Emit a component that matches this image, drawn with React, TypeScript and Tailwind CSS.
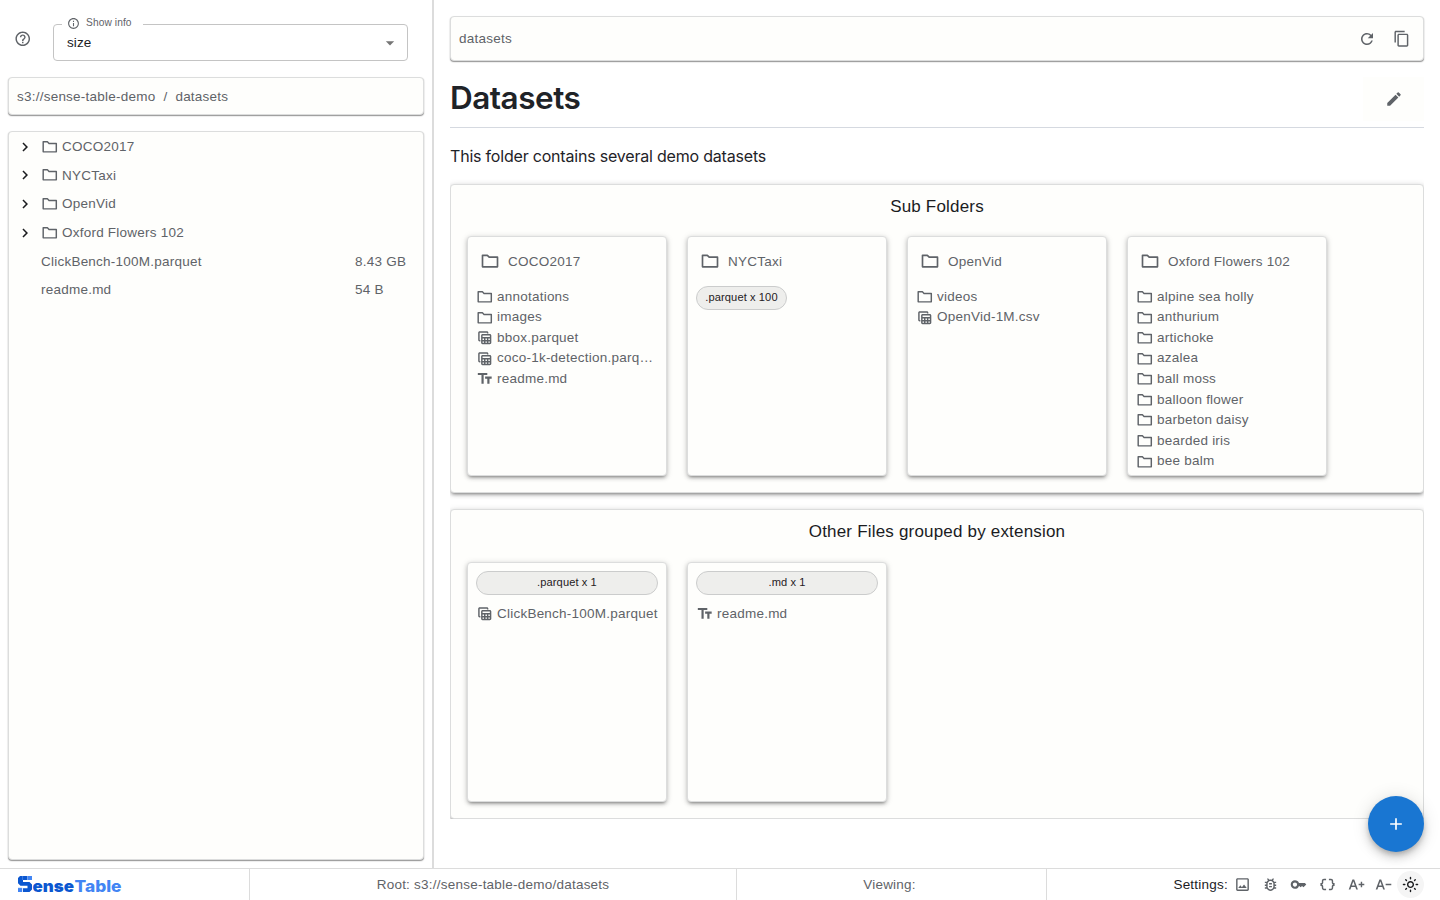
import React from "react";
import {
  MdAdd,
  MdArrowDropDown,
  MdChevronRight,
  MdContentCopy,
  MdDataObject,
  MdEdit,
  MdHelpOutline,
  MdInfoOutline,
  MdKey,
  MdOutlineBugReport,
  MdOutlineImage,
  MdOutlineLightMode,
  MdRefresh,
  MdTableView,
  MdTextDecrease,
  MdTextFields,
  MdTextIncrease,
} from "react-icons/md";

type Kind = "folder" | "table" | "text";
type Entry = { kind: Kind; name: string };

function FolderIcon({ className }: { className?: string }) {
  return (
    <svg viewBox="0 0 24 24" fill="none" stroke="currentColor" className={className}>
      <path d="M3 19V5.2h5.8l2.2 2.2H21V19z" strokeWidth="2" strokeLinejoin="round" />
    </svg>
  );
}

const icons: Record<Kind, React.ComponentType<{ className?: string }>> = {
  folder: FolderIcon,
  table: MdTableView,
  text: MdTextFields,
};

const dir = (name: string): Entry => ({ kind: "folder", name });

const folders: { name: string; chip?: string; entries: Entry[] }[] = [
  {
    name: "COCO2017",
    entries: [
      dir("annotations"),
      dir("images"),
      { kind: "table", name: "bbox.parquet" },
      { kind: "table", name: "coco-1k-detection.parquet" },
      { kind: "text", name: "readme.md" },
    ],
  },
  { name: "NYCTaxi", chip: ".parquet x 100", entries: [] },
  { name: "OpenVid", entries: [dir("videos"), { kind: "table", name: "OpenVid-1M.csv" }] },
  {
    name: "Oxford Flowers 102",
    entries: [
      "alpine sea holly",
      "anthurium",
      "artichoke",
      "azalea",
      "ball moss",
      "balloon flower",
      "barbeton daisy",
      "bearded iris",
      "bee balm",
    ].map(dir),
  },
];

const groups: { chip: string; entry: Entry }[] = [
  { chip: ".parquet x 1", entry: { kind: "table", name: "ClickBench-100M.parquet" } },
  { chip: ".md x 1", entry: { kind: "text", name: "readme.md" } },
];

const looseFiles = [
  { name: "ClickBench-100M.parquet", size: "8.43 GB" },
  { name: "readme.md", size: "54 B" },
];

const barShadow = "shadow-[0_1px_1px_rgba(0,0,0,0.35),0_1px_2px_rgba(0,0,0,0.12)]";
const cardShadow =
  "shadow-[0_3px_3px_-2px_rgba(0,0,0,0.3),0_2px_4px_0_rgba(0,0,0,0.18),0_1px_7px_0_rgba(0,0,0,0.12)]";

function EntryRow({ entry }: { entry: Entry }) {
  const Icon = icons[entry.kind];
  return (
    <div className="flex h-[20.57px] items-center gap-[4px]">
      <Icon className="mt-[1px] -ml-[0.5px] size-[17.5px] shrink-0" />
      <span className="truncate pt-[1px]">{entry.name}</span>
    </div>
  );
}

function Card({ children }: { children: React.ReactNode }) {
  return (
    <div
      className={`h-[240px] w-[200px] overflow-hidden rounded-[4px] border border-[#dcdddd] bg-[#fefefc] pr-[7px] pl-2 ${cardShadow}`}
    >
      {children}
    </div>
  );
}

function Chip({ label, wide = false }: { label: string; wide?: boolean }) {
  return (
    <div
      className={`flex h-6 items-center justify-center rounded-full border border-[#cbcccc] bg-[#eeeeec] pb-[2px] text-[11.1px] tracking-[0.1px] text-[#1f2023] ${wide ? "w-[182px]" : "w-[91px]"}`}
    >
      {label}
    </div>
  );
}

function Sidebar() {
  return (
    <aside className="flex w-[434px] shrink-0 flex-col border-r-2 border-[#dcdcdc] pr-2 pl-2">
      <div className="flex h-[77px] shrink-0">
        <MdHelpOutline className="mt-[30px] ml-[5.5px] size-[17.5px]" />
        <div className="relative mt-6 ml-[22px] flex h-[37px] w-[355px] items-center rounded-[4px] border border-[#c4c4c4] pr-[7px] pl-[13px] text-[#1b1c1f]">
          <span className="grow tracking-[0.1px]">size</span>
          <MdArrowDropDown className="size-5 text-[#757575]" />
          <div className="absolute -top-[9px] left-2 flex h-[14px] w-[81px] items-center bg-white pl-[5px] text-[10.2px] tracking-[0.1px] text-[#5f6368]">
            <MdInfoOutline className="mr-[6px] size-[13px]" />
            Show info
          </div>
        </div>
      </div>
      <div
        className={`flex h-[38px] shrink-0 items-center gap-2 rounded-[4px] border border-[#dcdddd] bg-[#fefefc] px-2 pt-[1px] ${barShadow}`}
      >
        <span>s3://sense-table-demo</span>
        <span>/</span>
        <span>datasets</span>
      </div>
      <div
        className={`mt-4 h-[729px] rounded-[4px] border border-[#dcdddd] bg-[#fefefc] pt-[0.25px] ${barShadow}`}
      >
        {folders.map((f) => (
          <div key={f.name} className="flex h-[28.67px] items-center pl-[7px]">
            <MdChevronRight className="size-[18px] text-[#1b1c1f]" />
            <FolderIcon className="mr-[4px] ml-[6.5px] size-[17.5px]" />
            <span className="pt-[1px]">{f.name}</span>
          </div>
        ))}
        {looseFiles.map((f) => (
          <div key={f.name} className="flex h-[28.67px] items-center pt-[1px] pl-8">
            <span className="w-[314px]">{f.name}</span>
            <span>{f.size}</span>
          </div>
        ))}
      </div>
    </aside>
  );
}

function Main() {
  return (
    <main className="min-w-0 grow pt-4 pr-4 pl-4">
      <div
        className={`flex h-[45px] items-center rounded-[4px] border border-[#dcdddd] bg-[#fefefc] px-2 ${barShadow}`}
      >
        <span className="grow">datasets</span>
        <MdRefresh className="mr-[17px] size-[18px]" />
        <MdContentCopy className="mr-[5px] size-[17.5px]" />
      </div>
      <div className="mt-4 flex h-[51px] justify-between border-b border-[#d5d9e0] font-['Inter'] text-[#1f2328]">
        <h1 className="text-[31.5px] leading-[42px] font-semibold tracking-[-0.5px]">
          Datasets
        </h1>
        <div className="flex h-11 w-[61px] items-center justify-center bg-[#fefefc]">
          <MdEdit className="size-[18px] text-[#5f6368]" />
        </div>
      </div>
      <p className="mt-4 h-6 font-['Inter'] text-[16px] leading-6 tracking-[-0.2px] text-[#1f2328]">
        This folder contains several demo datasets
      </p>
      <div className="mt-4 [clip-path:inset(-16px_0_0_0)]">
        <section
          className={`h-[309px] rounded-[4px] border border-[#dcdddd] bg-[#fefefc] px-4 ${cardShadow}`}
        >
          <h2 className="h-[51px] pt-[9px] text-center text-[17px] leading-[26px] tracking-[0.19px] text-[#1b1c1f]">
            Sub Folders
          </h2>
          <div className="flex gap-5">
            {folders.map((f) => (
              <Card key={f.name}>
                <div className="flex h-[49px] items-center pb-[1px] pl-1">
                  <FolderIcon className="mr-2 size-5" />
                  <span className="pt-[1px]">{f.name}</span>
                </div>
                {f.chip && <Chip label={f.chip} />}
                <div className="pr-1">
                  {f.entries.map((e) => (
                    <EntryRow key={e.name} entry={e} />
                  ))}
                </div>
              </Card>
            ))}
          </div>
        </section>
        <section
          className={`mt-4 h-[310px] rounded-[4px] border border-[#dcdddd] bg-[#fefefc] px-4 ${cardShadow}`}
        >
          <h2 className="h-[52px] pt-[9px] text-center text-[17px] leading-[26px] tracking-[0.19px] text-[#1b1c1f]">
            Other Files grouped by extension
          </h2>
          <div className="flex gap-5">
            {groups.map((g) => (
              <Card key={g.chip}>
                <div className="mt-2 mb-2">
                  <Chip label={g.chip} wide />
                </div>
                <EntryRow entry={g.entry} />
              </Card>
            ))}
          </div>
        </section>
      </div>
    </main>
  );
}

function Logo() {
  return (
    <svg viewBox="0 0 110 26" className="h-[26px] w-[110px] overflow-visible">
      <path
        d="M2 5h7.5v4H5v2h6.500L14 13.500v5L11.500 21H5v-3.700h4.500v-2.500H2.500L0 12.300V7z"
        fill="#0b57d0"
      />
      <path d="M9.800 5H14v4H9.800zM0 17h4.200v4H0z" fill="#4285f4" />
      <path d="M4.600 5v4M0 17h4.200" stroke="#7aa7f5" strokeWidth="0.5" />
      <text
        x="14.5"
        y="20.8"
        fontFamily="Inter"
        fontWeight="900"
        fontSize="16.3"
        letterSpacing="0"
        textLength="41.5"
        lengthAdjust="spacingAndGlyphs"
        fill="#0b57d0"
      >
        ense
      </text>
      <text
        x="56.5"
        y="20.8"
        fontFamily="Inter"
        fontWeight="800"
        fontSize="16.3"
        letterSpacing="0"
        textLength="47"
        lengthAdjust="spacingAndGlyphs"
        fill="#4285f4"
      >
        Table
      </text>
    </svg>
  );
}

function Footer() {
  return (
    <footer className="flex h-8 shrink-0 border-t border-[#dcdcdc]">
      <div className="flex w-[250px] items-center border-r border-[#dcdcdc] pb-[2px] pl-[17.5px]">
        <Logo />
      </div>
      <div className="flex w-[487px] items-center justify-center border-r border-[#dcdcdc]">
        Root: s3://sense-table-demo/datasets
      </div>
      <div className="flex w-[310px] items-center justify-center border-r border-[#dcdcdc] pr-[4px]">
        Viewing:
      </div>
      <div className="flex grow items-center justify-end pr-4">
        <span className="mr-[6px] text-[#1b1c1f]">Settings:</span>
        <MdOutlineImage className="mr-[11px] size-[17px]" />
        <MdOutlineBugReport className="mr-[11px] size-[17px]" />
        <MdKey className="mr-[12px] size-[17px]" />
        <MdDataObject className="mr-[12px] size-[17px]" />
        <MdTextIncrease className="mr-[10px] size-[17px]" />
        <MdTextDecrease className="mr-[5px] size-[17px]" />
        <div className="flex size-[27px] items-center justify-center rounded-full bg-[#f5f5f5]">
          <MdOutlineLightMode className="size-[17px] text-[#1b1c1f]" />
        </div>
      </div>
    </footer>
  );
}

export default function App() {
  return (
    <div className="relative flex h-[900px] w-[1440px] flex-col overflow-hidden bg-white font-['Liberation_Sans',Arial,sans-serif] text-[13.5px] leading-5 tracking-[0.23px] text-[#5f6368]">
      <div className="flex h-[868px] shrink-0">
        <Sidebar />
        <Main />
      </div>
      <Footer />
      <button className="absolute top-[796px] left-[1368px] flex size-14 items-center justify-center rounded-full bg-[#1976d2] pb-[1px] text-white shadow-[0_3px_5px_-1px_rgba(0,0,0,0.2),0_6px_10px_0_rgba(0,0,0,0.14),0_1px_18px_0_rgba(0,0,0,0.12)]">
        <MdAdd className="size-[20px]" />
      </button>
    </div>
  );
}
